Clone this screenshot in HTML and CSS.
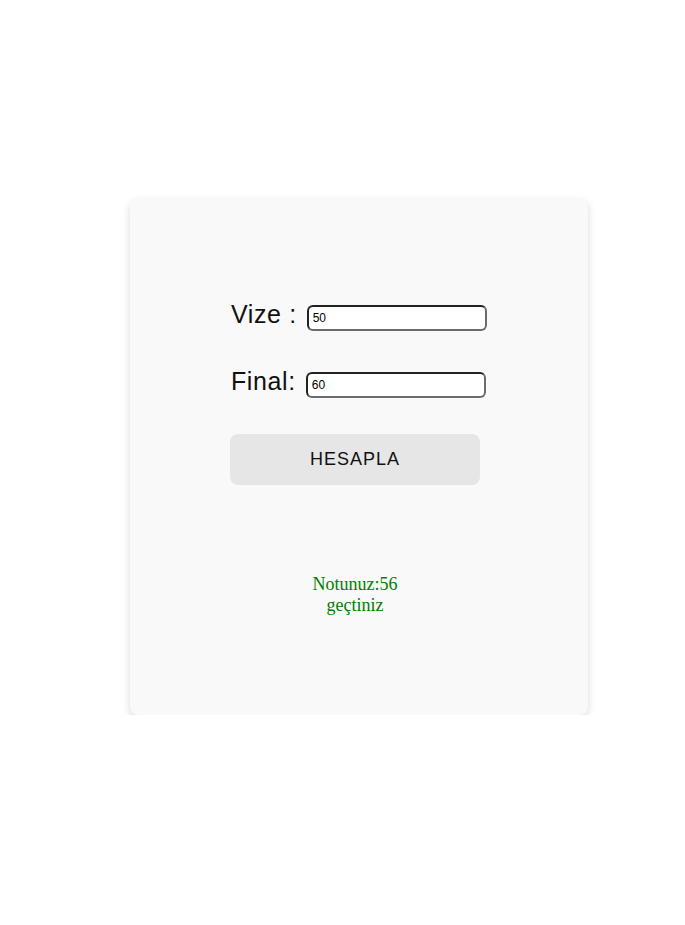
FILE: index.html
```html
<!DOCTYPE html>
<html lang="tr">
<head>
<meta charset="utf-8">
<title>Not Hesaplama</title>
<link rel="stylesheet" href="styles.css">
</head>
<body>
<div class="card">
  <div class="form">
    <div class="row">
      <label class="label" for="vize">Vize :</label>
      <input class="field" id="vize" type="text" value="50">
    </div>
    <div class="row row-final">
      <label class="label" for="final">Final:</label>
      <input class="field" id="final" type="text" value="60">
    </div>
    <button class="btn" type="button">HESAPLA</button>
    <div class="result">Notunuz:56<br>geçtiniz</div>
  </div>
</div>
</body>
</html>
```

FILE: styles.css
```css
html, body {
  margin: 0;
  padding: 0;
  background: #ffffff;
}
body {
  padding: 199px 0 0 130px;
}
.card {
  box-sizing: border-box;
  width: 458px;
  height: 516px;
  background: #f9f9f9;
  border-radius: 8px;
  box-shadow: 0 3px 8px rgba(0, 0, 0, 0.15);
  padding: 106px 0 0 100px;
}
.form {
  width: 250px;
  display: flex;
  flex-direction: column;
}
.row {
  display: flex;
  align-items: flex-start;
  height: 26px;
  white-space: nowrap;
}
.row-final {
  margin-top: 41px;
}
.label {
  font-family: "Liberation Sans", Arial, sans-serif;
  font-size: 25px;
  line-height: 26px;
  letter-spacing: 0.6px;
  color: #111;
  margin: -4px 10px 0 1px;
}
.field {
  box-sizing: border-box;
  width: 180px;
  height: 26px;
  flex: none;
  padding: 1px 4px;
  border: 2px solid;
  border-color: #222 #6b6b6b #6b6b6b #222;
  border-radius: 6px;
  background: #fff;
  font-family: "Liberation Sans", Arial, sans-serif;
  font-size: 12px;
  color: #000;
  outline: none;
}
.btn {
  margin-top: 36px;
  width: 250px;
  height: 51px;
  border: none;
  border-radius: 8px;
  background: #e6e6e6;
  font-family: "Liberation Sans", Arial, sans-serif;
  font-size: 18px;
  letter-spacing: 1px;
  color: #111;
  cursor: pointer;
}
.result {
  margin-top: 89px;
  text-align: center;
  font-family: "Liberation Serif", "Times New Roman", serif;
  font-size: 18px;
  line-height: 21px;
  color: #008000;
}
```
